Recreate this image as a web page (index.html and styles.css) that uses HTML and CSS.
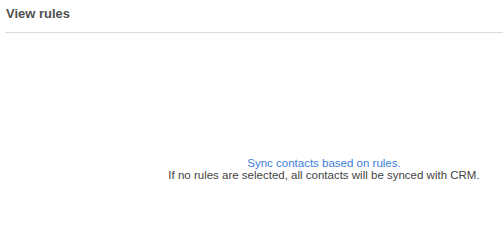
FILE: index.html
```html
<!DOCTYPE html>
<html>
<head>
<meta charset="utf-8">
<link rel="stylesheet" href="styles.css">
</head>
<body>
<div class="panel">
  <div class="header">
    <h2 class="title">View rules</h2>
  </div>
  <div class="body">
    <div class="empty">
      <div class="empty-link">Sync contacts based on rules.</div>
      <div class="empty-note">If no rules are selected, all contacts will be synced with CRM.</div>
    </div>
  </div>
</div>
</body>
</html>
```
FILE: styles.css
```css
html, body {
  margin: 0;
  padding: 0;
  background: #ffffff;
}
body {
  font-family: "Liberation Sans", Arial, sans-serif;
  width: 504px;
  height: 206px;
  overflow: hidden;
}
.panel {
  padding: 0 1px 0 5px;
}
.header {
  padding: 6px 0 11px 1px;
  border-bottom: 1px solid #dcdcdc;
}
.title {
  margin: 0;
  font-size: 13px;
  line-height: 15px;
  font-weight: bold;
  color: #505050;
}
.body {
  padding: 124px 0 0 140px;
}
.empty {
  text-align: center;
  font-size: 11.5px;
  line-height: 12px;
}
.empty-link {
  color: #3b7dd8;
}
.empty-note {
  color: #444444;
}
```
